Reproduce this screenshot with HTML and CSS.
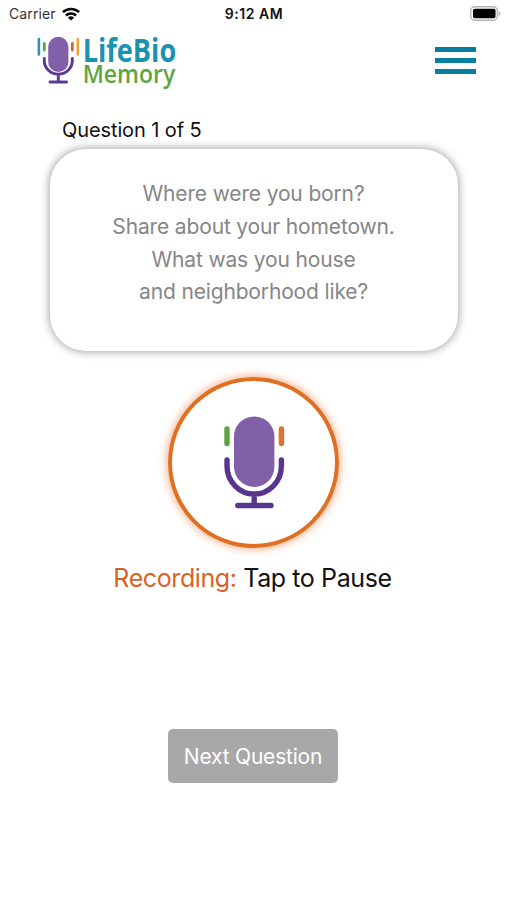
FILE: index.html
```html
<!DOCTYPE html>
<html lang="en">
<head>
<meta charset="utf-8">
<title>LifeBio Memory</title>
<link rel="stylesheet" href="styles.css">
</head>
<body>
<div class="status">
  <div class="status-left">
    <span class="carrier">Carrier</span>
    <svg class="wifi" viewBox="0 0 18 14" width="18" height="14">
      <g fill="none" stroke="#000" stroke-width="2.500">
        <path d="M.9 5.2a11.6 11.6 0 0 1 16.2 0"/>
        <path d="M3.9 8.500a7.3 7.3 0 0 1 10.2 0"/>
      </g>
      <path d="M9 13.600L5.900 10.700a4.500 4.500 0 0 1 6.200 0z"/>
    </svg>
  </div>
  <span class="time">9:12 AM</span>
  <svg class="battery" viewBox="0 0 31 15" width="31" height="15">
    <rect x=".7" y=".7" width="26.600" height="13.600" rx="4" fill="#fff" stroke="#b5b5b5" stroke-width="1.400"/>
    <rect x="3" y="2.800" width="22.500" height="9.400" rx="1.800"/>
    <path d="M28.700 5v5q2-1 2-2.500t-2-2.500z" fill="#b5b5b5"/>
  </svg>
</div>
<header class="header">
  <svg class="logo" viewBox="0 0 142 56" width="142" height="56">
    <g fill="none" stroke-linecap="round">
      <path d="M1.900 4V19.500" stroke="#2b93b5" stroke-width="2.600"/>
      <path d="M7.300 8.500V15" stroke="#5fa544" stroke-width="2.800"/>
      <path d="M35.300 8.500V15" stroke="#d8632a" stroke-width="2.800"/>
      <path d="M40.800 4V19.500" stroke="#efa13c" stroke-width="2.600"/>
      <path d="M7.300 23.500v2.200a14 13.500 0 0 0 28 0v-2.200M21.300 39.500v7M13 47h16.600" stroke="#5b3796" stroke-width="2.900"/>
    </g>
    <rect x="11.200" y="1.800" width="20.200" height="35.200" rx="10.100" fill="#815fa9"/>
    <text class="logo-life" x="45.700" y="26.700" textLength="93.500" lengthAdjust="spacingAndGlyphs">LifeBio</text>
    <text class="logo-memory" x="45.700" y="48" textLength="92.500" lengthAdjust="spacingAndGlyphs">Memory</text>
  </svg>
  <div class="menu"><i></i><i></i><i></i></div>
</header>
<main class="main">
  <h1 class="progress">Question 1 of 5</h1>
  <section class="card">
    <p>Where were you born?</p>
    <p>Share about your hometown.</p>
    <p>What was you house</p>
    <p>and neighborhood like?</p>
  </section>
  <div class="record">
    <svg viewBox="0 0 64 94" width="64" height="94">
      <g fill="none" stroke-linecap="round" stroke-width="5.400">
        <path d="M5 13V27.500" stroke="#5fa240"/>
        <path d="M59.400 13V27.500" stroke="#e2712a"/>
        <path d="M5 44v6a27.200 28 0 0 0 54.400 0v-6M32.200 78v11.500M15.800 89.500h33.200" stroke="#58368f"/>
      </g>
      <rect x="12" y=".4" width="40.400" height="70.500" rx="20.200" fill="#815fa9"/>
    </svg>
  </div>
  <p class="state"><span class="rec">Recording:</span> <span class="tap">Tap to Pause</span></p>
  <div class="next"><span>Next Question</span></div>
</main>
</body>
</html>
```
FILE: styles.css
```css
* { box-sizing: border-box; }
body {
  margin: 0;
  height: 900px;
  background: #fff;
  color: #111;
  font-family: Inter, "Liberation Sans", sans-serif;
  overflow: hidden;
}
p, h1 { margin: 0; white-space: nowrap; }
.status {
  height: 27px;
  display: grid;
  grid-template-columns: 1fr auto 1fr;
  align-items: center;
  padding: 0 6px 0 9px;
  font-size: 14px;
}
.status-left { display: flex; align-items: center; gap: 6px; }
.carrier { color: #333; letter-spacing: .1px; }
.time { font-weight: 600; letter-spacing: .55px; margin-left: -2px; }
.battery { justify-self: end; }
.header {
  height: 75px;
  display: flex;
  justify-content: space-between;
  padding: 8px 31px 0 37px;
}
.logo { overflow: visible; }
.logo-life, .logo-memory { font-family: "Open Sans", sans-serif; }
.logo-life { font-size: 33px; font-weight: 700; fill: #1b92b0; }
.logo-memory { font-size: 24.5px; font-weight: 600; fill: #5fa640; }
.menu {
  display: flex;
  flex-direction: column;
  gap: 6px;
  width: 41px;
  margin-top: 12px;
}
.menu i { height: 5px; background: #087f9f; }
.main { display: flex; flex-direction: column; align-items: center; }
.progress {
  align-self: flex-start;
  margin-left: 62px;
  height: 48px;
  padding-top: 15px;
  font-size: 20px;
  font-weight: 400;
  line-height: 26px;
  letter-spacing: -.1px;
}
.card {
  width: 408px;
  height: 202px;
  margin-top: -1px;
  padding-top: 29px;
  border-radius: 36px;
  background: #fff;
  box-shadow: 0 0 9px 1px rgba(0, 0, 0, .36);
  color: #868686;
  font-size: 21px;
  line-height: 32.800px;
  letter-spacing: -.15px;
  text-align: center;
}
.record {
  width: 171px;
  height: 171px;
  margin-top: 26px;
  display: flex;
  align-items: center;
  justify-content: center;
  border: 4.500px solid #e06f22;
  border-radius: 50%;
  box-shadow: 0 0 7px 2px rgba(235, 120, 50, .5);
}
.state {
  margin-top: 14px;
  font-size: 25px;
  line-height: 32px;
  letter-spacing: -.4px;
  margin-right: 2px;
}
.rec { color: #db6226; }
.next {
  width: 170px;
  height: 54px;
  margin-top: 135px;
  margin-right: 1px;
  display: flex;
  align-items: center;
  justify-content: center;
  border-radius: 5px;
  background: #a8a8a8;
  color: #fff;
  font-size: 21px;
  letter-spacing: -.2px;
  white-space: nowrap;
}
```
